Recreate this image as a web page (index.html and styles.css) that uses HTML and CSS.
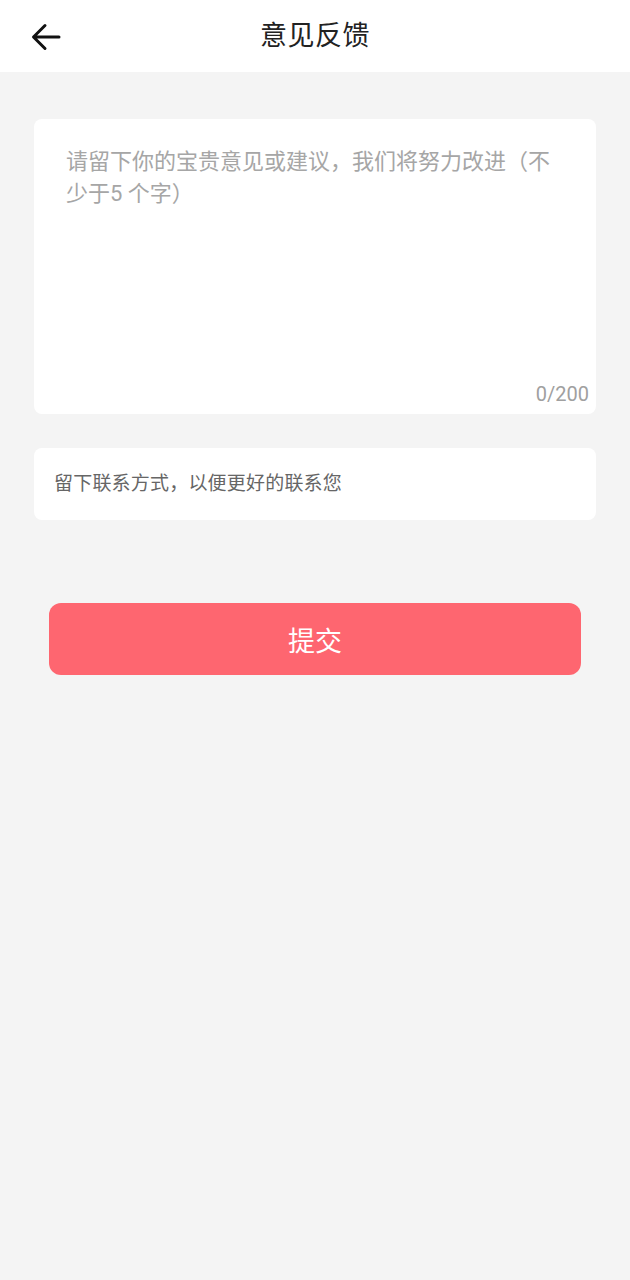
FILE: index.html
```html
<!DOCTYPE html>
<html lang="zh-CN">
<head>
<meta charset="utf-8">
<title>意见反馈</title>
<link rel="stylesheet" href="styles.css">
</head>
<body>
<header class="topbar">
  <div class="back">
    <svg width="32" height="28" viewBox="0 0 32 28" aria-hidden="true">
      <path d="M29 14 H4 M15 2.5 L3.5 14 L15 25.5" fill="none" stroke="#111" stroke-width="3" stroke-linecap="round" stroke-linejoin="round"/>
    </svg>
  </div>
  <h1 class="title">意见反馈</h1>
</header>
<main class="content">
  <section class="card feedback">
    <div class="placeholder">请留下你的宝贵意见或建议，我们将努力改进（不少于5 个字）</div>
    <div class="counter">0/200</div>
  </section>
  <section class="card contact">
    <div class="contact-text">留下联系方式，以便更好的联系您</div>
  </section>
  <button class="submit">提交</button>
</main>
</body>
</html>
```
FILE: styles.css
```css
html, body {
  margin: 0;
  padding: 0;
}
body {
  background: #f4f4f4;
  font-family: "Roboto", "Noto Sans CJK SC", sans-serif;
  width: 630px;
  min-height: 1280px;
}
.topbar {
  height: 72px;
  background: #ffffff;
  display: flex;
  align-items: center;
  justify-content: center;
  position: relative;
}
.back {
  position: absolute;
  left: 30px;
  top: 23px;
  width: 32px;
  height: 28px;
  display: flex;
}
.title {
  margin: 0;
  font-size: 27px;
  font-weight: 400;
  color: #222222;
  line-height: 36px;
  letter-spacing: 0.5px;
}
.content {
  padding: 47px 34px 0;
  display: flex;
  flex-direction: column;
}
.card {
  background: #ffffff;
  border-radius: 8px;
}
.feedback {
  height: 295px;
  display: flex;
  flex-direction: column;
}
.placeholder {
  padding: 27px 32px 0;
  font-size: 22px;
  line-height: 32px;
  color: #a6a6a6;
}
.counter {
  margin-top: auto;
  text-align: right;
  padding: 0 7px 8px 0;
  font-size: 20px;
  line-height: 24px;
  color: #a0a0a0;
}
.contact {
  margin-top: 34px;
  height: 72px;
  display: flex;
  align-items: center;
  padding-left: 20px;
}
.contact-text {
  font-size: 19px;
  color: #666666;
  line-height: 26px;
  letter-spacing: 0.2px;
}
.submit {
  margin: 83px 15px 0;
  height: 72px;
  border: none;
  border-radius: 12px;
  background: #fe6670;
  color: #ffffff;
  font-family: "Noto Sans CJK SC", sans-serif;
  font-size: 27px;
  padding: 0;
}
```
